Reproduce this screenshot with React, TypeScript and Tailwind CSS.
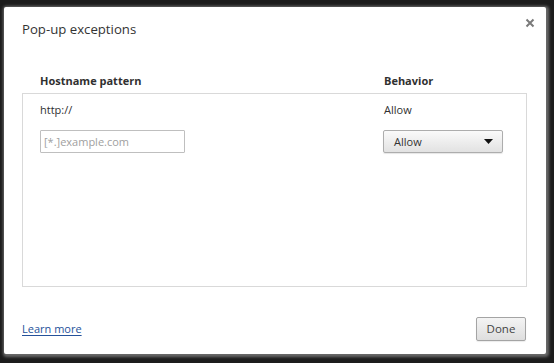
export default function App() {
  return (
    <div className="w-[554px] h-[363px] bg-[#1c1c1c] pt-[7px] pl-[4px] font-['Open_Sans',sans-serif]">
      <div className="relative w-[542px] h-[347px] bg-white rounded-[2px] shadow-[1px_1px_3px_2px_rgba(160,160,160,0.6)] flex flex-col pl-[18px] pr-[19px]">
        {/* Title */}
        <div className="h-[46px] flex items-center">
          <h1 className="text-[13.2px] text-[#333] leading-none">Pop-up exceptions</h1>
        </div>
        <button className="absolute right-[11px] top-[11px] w-[10px] h-[10px] flex items-center justify-center">
          <svg width="10" height="10" viewBox="0 0 10 10">
            <path d="M1.5 1.5 L8.5 8.5 M8.5 1.5 L1.5 8.5" stroke="#7a7a7a" strokeWidth="2" />
          </svg>
        </button>

        {/* Column headers */}
        <div className="h-[40px] flex items-end pb-[4px] pl-[18px] text-[11px] font-bold text-[#303030] leading-[16px]">
          <div className="w-[344px]">Hostname pattern</div>
          <div>Behavior</div>
        </div>

        {/* List box */}
        <div className="h-[194px] border border-[#d9d9d9] pl-[17px] pt-[8px] flex flex-col gap-[12px] text-[11px] text-[#303030] leading-[16px]">
          <div className="flex">
            <div className="w-[344px]">http://</div>
            <div>Allow</div>
          </div>
          <div className="flex">
            <div className="w-[343px]">
              <input
                className="w-[145px] h-[23px] border border-[#bfbfbf] rounded-[1px] px-[3px] text-[11px] text-[#333] outline-none placeholder:text-[#a0a0a0]"
                placeholder="[*.]example.com"
              />
            </div>
            <div className="w-[120px] h-[23px] border border-[#adadad] rounded-[2px] bg-gradient-to-b from-[#fafafa] to-[#e2e2e2] shadow-[0_1px_1px_rgba(0,0,0,0.1)] flex items-center justify-between pl-[10px] pr-[9px] text-[#333]">
              <span>Allow</span>
              <svg width="9" height="5" viewBox="0 0 9 5">
                <path d="M0 0 H9 L4.5 5 Z" fill="#111" />
              </svg>
            </div>
          </div>
        </div>

        {/* Footer */}
        <div className="mt-[30px] flex items-center justify-between">
          <a href="#" className="text-[11px] text-[#25519a] underline underline-offset-2 leading-[16px]">
            Learn more
          </a>
          <button className="w-[50px] h-[24px] mr-[1px] border border-[#a4a4a4] rounded-[2px] bg-gradient-to-b from-[#f4f4f4] to-[#dedede] text-[11.5px] text-[#444] shadow-[0_1px_1px_rgba(0,0,0,0.08)]">
            Done
          </button>
        </div>
      </div>
    </div>
  );
}
